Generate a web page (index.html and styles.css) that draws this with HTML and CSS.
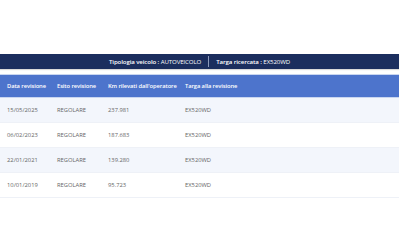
FILE: index.html
```html
<!DOCTYPE html>
<html lang="it">
<head>
<meta charset="utf-8">
<link rel="stylesheet" href="styles.css">
</head>
<body>
<div class="wrap">
  <div class="summary">
    <span class="item"><b>Tipologia veicolo :</b> AUTOVEICOLO</span>
    <span class="sep"></span>
    <span class="item"><b>Targa ricercata :</b> EX520WD</span>
  </div>
  <table class="grid">
    <thead>
      <tr>
        <th class="c1">Data revisione</th>
        <th class="c2">Esito revisione</th>
        <th class="c3">Km rilevati dall'operatore</th>
        <th class="c4">Targa alla revisione</th>
      </tr>
    </thead>
    <tbody>
      <tr><td>15/05/2025</td><td>REGOLARE</td><td>237.981</td><td>EX520WD</td></tr>
      <tr><td>06/02/2023</td><td>REGOLARE</td><td>187.683</td><td>EX520WD</td></tr>
      <tr><td>22/01/2021</td><td>REGOLARE</td><td>139.280</td><td>EX520WD</td></tr>
      <tr><td>10/01/2019</td><td>REGOLARE</td><td>95.723</td><td>EX520WD</td></tr>
    </tbody>
  </table>
</div>
</body>
</html>
```
FILE: styles.css
```css
html, body {
  margin: 0;
  padding: 0;
  background: #fff;
}
body {
  font-family: "Open Sans", "Liberation Sans", sans-serif;
}
.wrap {
  padding-top: 54px;
  width: 399px;
}
.summary {
  height: 15px;
  background: #1b2e5e;
  color: #fff;
  font-size: 6.1px;
  letter-spacing: -0.1px;
  display: flex;
  align-items: center;
  justify-content: center;
  gap: 7px;
  box-shadow: 0 1px 1px rgba(0,0,0,0.15);
}
.summary b {
  font-weight: 600;
}
.sep {
  width: 1px;
  height: 11px;
  background: #8c9abb;
}
.grid {
  margin-top: 5px;
  width: 399px;
  border-collapse: collapse;
  table-layout: fixed;
  font-size: 5.8px;
}
.grid th {
  background: #4d74cc;
  color: #fff;
  font-weight: 600;
  text-align: left;
  white-space: nowrap;
  letter-spacing: -0.1px;
  height: 22px;
  padding: 0 0 0 7px;
  border-top: 1px solid #c9d6f0;
  border-bottom: 1px solid #c9d6f0;
}
.grid td {
  color: #666;
  height: 24px;
  padding: 0 0 0 7px;
  white-space: nowrap;
  border-bottom: 1px solid #eef1f7;
}
.grid tbody tr:nth-child(odd) td {
  background: #f3f6fc;
}
.c1 { width: 43px; }
.c2 { width: 44px; }
.c3 { width: 70px; }
```
